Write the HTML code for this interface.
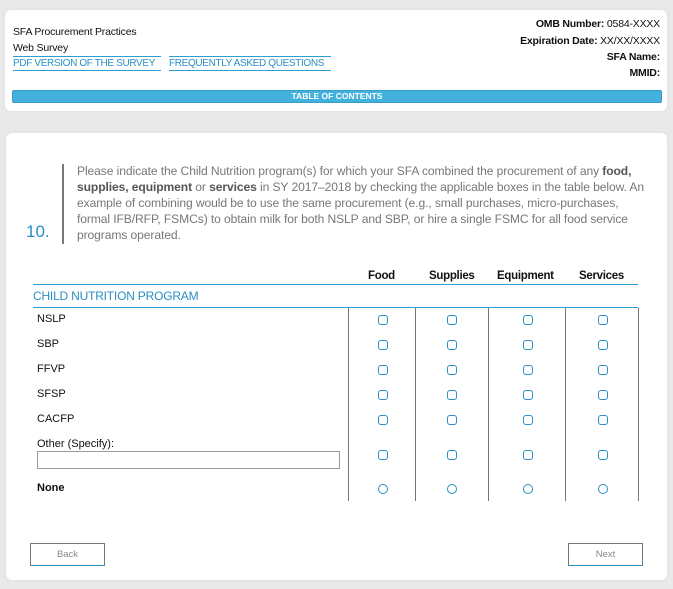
<!DOCTYPE html>
<html><head><style>
*{margin:0;padding:0;box-sizing:border-box}
body{width:673px;height:589px;background:#e9e9e9;font-family:"Liberation Sans",sans-serif;position:relative;overflow:hidden;color:#111}
.card{position:absolute;background:#fff;border-radius:6px;box-shadow:0 0 4px rgba(0,0,0,.06)}
.a{position:absolute;white-space:nowrap}
.lnk{color:#2a8fc4;font-size:10px;letter-spacing:-0.35px;border-top:1px solid #2a9fd0;border-bottom:1px solid #2a9fd0;line-height:13px;overflow:hidden}
.r{right:13px;text-align:right;font-size:10.5px;letter-spacing:-0.2px}
.q{color:#777;font-size:12.1px;left:77px;letter-spacing:-0.1px}
.q b{color:#555}
.vl{position:absolute;width:1px;background:#777;top:308px;height:193px}
.cb{position:absolute;width:10px;height:10px;border:1.3px solid #2a8fc4;border-radius:3px}
.rd{position:absolute;width:10px;height:10px;border:1.3px solid #2a8fc4;border-radius:50%}
.lbl{left:37px;font-size:11px}
.hd{position:absolute;white-space:nowrap;top:270px;font-size:11.5px;font-weight:bold;letter-spacing:-0.3px}
.btn{position:absolute;width:75px;height:23px;border:1px solid #777;border-bottom:1.5px solid #2a8fc4;font-size:9.5px;color:#888;text-align:center;line-height:21px;background:#fff}
</style></head><body>
<div class="card" style="left:5px;top:10px;width:662px;height:101px"></div>
<div class="a" style="left:13px;top:26px;font-size:10.5px;letter-spacing:-0.2px">SFA Procurement Practices</div>
<div class="a" style="left:13px;top:42px;font-size:10.5px;letter-spacing:-0.2px">Web Survey</div>
<div class="a lnk" style="left:13px;top:56px;width:148px">PDF VERSION OF THE SURVEY</div>
<div class="a lnk" style="left:169px;top:56px;width:162px">FREQUENTLY ASKED QUESTIONS</div>
<div class="a r" style="top:18px"><b>OMB Number:</b> 0584-XXXX</div>
<div class="a r" style="top:35px"><b>Expiration Date:</b> XX/XX/XXXX</div>
<div class="a r" style="top:51px"><b>SFA Name:</b></div>
<div class="a r" style="top:67px"><b>MMID:</b></div>
<div class="a" style="left:12px;top:90px;width:650px;height:13px;background:#43b1dd;border:1px solid #3a9cc8;border-radius:2px;color:#fff;font-size:8.5px;font-weight:bold;text-align:center;line-height:11px">TABLE OF CONTENTS</div>

<div class="card" style="left:6px;top:133px;width:661px;height:447px"></div>
<div class="a" style="left:26px;top:222px;font-size:17px;color:#2a8fc4">10.</div>
<div class="a" style="left:62px;top:164px;width:2px;height:80px;background:#777"></div>
<div class="a q" style="top:164px">Please indicate the Child Nutrition program(s) for which your SFA combined the procurement of any <b>food,</b></div>
<div class="a q" style="top:180px"><b>supplies, equipment</b> or <b>services</b> in SY 2017–2018 by checking the applicable boxes in the table below. An</div>
<div class="a q" style="top:196px">example of combining would be to use the same procurement (e.g., small purchases, micro-purchases,</div>
<div class="a q" style="top:212px">formal IFB/RFP, FSMCs) to obtain milk for both NSLP and SBP, or hire a single FSMC for all food service</div>
<div class="a q" style="top:228px">programs operated.</div>

<div class="hd" style="left:368px">Food</div>
<div class="hd" style="left:429px">Supplies</div>
<div class="hd" style="left:497px">Equipment</div>
<div class="hd" style="left:579px">Services</div>
<div class="a" style="left:33px;top:284px;width:605px;height:1px;background:#2a9fd0"></div>
<div class="a" style="left:33px;top:289px;font-size:12px;color:#2a8fc4;letter-spacing:-0.2px">CHILD NUTRITION PROGRAM</div>
<div class="a" style="left:33px;top:307px;width:605px;height:1px;background:#2a9fd0"></div>
<div class="vl" style="left:348px"></div><div class="vl" style="left:415px"></div><div class="vl" style="left:488px"></div><div class="vl" style="left:565px"></div><div class="vl" style="left:638px"></div>

<div class="a lbl" style="top:313px">NSLP</div>
<div class="a lbl" style="top:338px">SBP</div>
<div class="a lbl" style="top:363px">FFVP</div>
<div class="a lbl" style="top:388px">SFSP</div>
<div class="a lbl" style="top:413px">CACFP</div>
<div class="a lbl" style="top:438px">Other (Specify):</div>
<div class="a" style="left:37px;top:451px;width:303px;height:18px;border:1px solid #999"></div>
<div class="a lbl" style="top:482px;font-weight:bold">None</div>

<div class="cb" style="left:378px;top:315px"></div><div class="cb" style="left:447px;top:315px"></div><div class="cb" style="left:523px;top:315px"></div><div class="cb" style="left:598px;top:315px"></div>
<div class="cb" style="left:378px;top:340px"></div><div class="cb" style="left:447px;top:340px"></div><div class="cb" style="left:523px;top:340px"></div><div class="cb" style="left:598px;top:340px"></div>
<div class="cb" style="left:378px;top:365px"></div><div class="cb" style="left:447px;top:365px"></div><div class="cb" style="left:523px;top:365px"></div><div class="cb" style="left:598px;top:365px"></div>
<div class="cb" style="left:378px;top:390px"></div><div class="cb" style="left:447px;top:390px"></div><div class="cb" style="left:523px;top:390px"></div><div class="cb" style="left:598px;top:390px"></div>
<div class="cb" style="left:378px;top:415px"></div><div class="cb" style="left:447px;top:415px"></div><div class="cb" style="left:523px;top:415px"></div><div class="cb" style="left:598px;top:415px"></div>
<div class="cb" style="left:378px;top:450px"></div><div class="cb" style="left:447px;top:450px"></div><div class="cb" style="left:523px;top:450px"></div><div class="cb" style="left:598px;top:450px"></div>
<div class="rd" style="left:378px;top:484px"></div><div class="rd" style="left:447px;top:484px"></div><div class="rd" style="left:523px;top:484px"></div><div class="rd" style="left:598px;top:484px"></div>

<div class="btn" style="left:30px;top:543px">Back</div>
<div class="btn" style="left:568px;top:543px">Next</div>
</body></html>
